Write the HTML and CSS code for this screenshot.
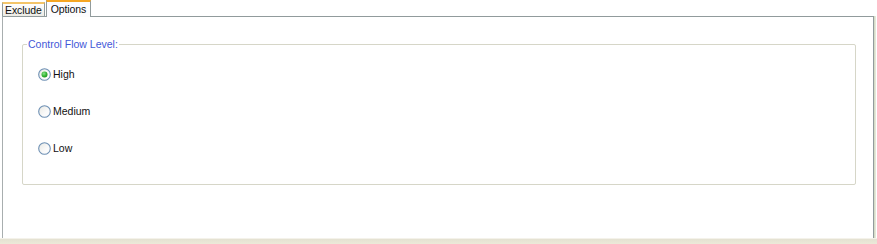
FILE: index.html
```html
<!DOCTYPE html>
<html>
<head>
<meta charset="utf-8">
<link rel="stylesheet" href="styles.css">
</head>
<body>
<div class="window">
  <div class="tabs">
    <div class="tab">Exclude</div>
    <div class="tab active">Options</div>
  </div>
  <div class="panel">
    <div class="group">
      <div class="legend">Control Flow Level:</div>
      <div class="radios">
        <label class="radio">
          <svg class="dot" width="13" height="13" viewBox="0 0 13 13">
            <defs>
              <linearGradient id="rg" x1="0" y1="0" x2="1" y2="1">
                <stop offset="0" stop-color="#e8e8e2"/>
                <stop offset="0.6" stop-color="#fafafa"/>
                <stop offset="1" stop-color="#ffffff"/>
              </linearGradient>
              <radialGradient id="gg" cx="0.4" cy="0.35" r="0.7">
                <stop offset="0" stop-color="#8be08b"/>
                <stop offset="0.6" stop-color="#33b533"/>
                <stop offset="1" stop-color="#1f8f1f"/>
              </radialGradient>
            </defs>
            <circle cx="6.5" cy="6.5" r="5.8" fill="url(#rg)" stroke="#6e90b4" stroke-width="1.1"/>
            <circle cx="6.5" cy="6.5" r="3" fill="url(#gg)"/>
          </svg>
          <span>High</span>
        </label>
        <label class="radio">
          <svg class="dot" width="13" height="13" viewBox="0 0 13 13">
            <circle cx="6.5" cy="6.5" r="5.8" fill="url(#rg)" stroke="#6e90b4" stroke-width="1.1"/>
          </svg>
          <span>Medium</span>
        </label>
        <label class="radio">
          <svg class="dot" width="13" height="13" viewBox="0 0 13 13">
            <circle cx="6.5" cy="6.5" r="5.8" fill="url(#rg)" stroke="#6e90b4" stroke-width="1.1"/>
          </svg>
          <span>Low</span>
        </label>
      </div>
    </div>
  </div>
  <div class="footer"></div>
</div>
</body>
</html>
```

FILE: styles.css
```css
html, body {
  margin: 0;
  padding: 0;
  background: #ffffff;
}
.window {
  width: 877px;
  height: 244px;
  display: flex;
  flex-direction: column;
  font-family: "Liberation Sans", Arial, sans-serif;
  font-size: 11px;
  color: #111;
  background: #ffffff;
}
.tabs {
  display: flex;
  align-items: flex-end;
  height: 16px;
  padding-left: 2px;
}
.tab {
  box-sizing: border-box;
  height: 14px;
  padding: 0 2px;
  line-height: 12px;
  border: 1px solid #919b9c;
  border-bottom: none;
  border-top: 2px solid #f3c56a;
  background: linear-gradient(#ffffff, #ecebe5);
  margin-right: 1px;
  font-size: 10.5px;
  letter-spacing: -0.1px;
}
.tab.active {
  height: 17px;
  margin-bottom: -1px;
  padding: 1px 4px 0;
  background: #fcfcfe;
  border-top: 2px solid #f5a623;
  position: relative;
  z-index: 1;
}
.panel {
  box-sizing: border-box;
  margin-left: 2px;
  width: 872px;
  height: 222px;
  border: 1px solid #919b9c;
  border-left-color: #a8aeaf;
  border-bottom: none;
  box-shadow: 1px 0 0 #d6dcc8, 2px 0 0 #e4e8d8;
  background: #ffffff;
  padding: 27px 17px 0 19px;
}
.group {
  position: relative;
  box-sizing: border-box;
  height: 141px;
  border: 1px solid #d6d6c8;
  border-radius: 2px;
  padding: 23px 0 0 15px;
}
.legend {
  position: absolute;
  left: 4px;
  top: -7px;
  padding: 0 1px;
  background: #ffffff;
  color: #4358d8;
  line-height: 13px;
  font-size: 10.5px;
}
.radios {
  display: flex;
  flex-direction: column;
  gap: 24px;
}
.radio {
  display: flex;
  align-items: center;
  gap: 2px;
  height: 13px;
  line-height: 13px;
  font-size: 10.5px;
  overflow: hidden;
}
.dot {
  display: block;
  flex: none;
}
.footer {
  flex: 1;
  background: linear-gradient(#e4e1d2, #ece9d8);
  border-top: 1px solid #f4f2ea;
}
```
